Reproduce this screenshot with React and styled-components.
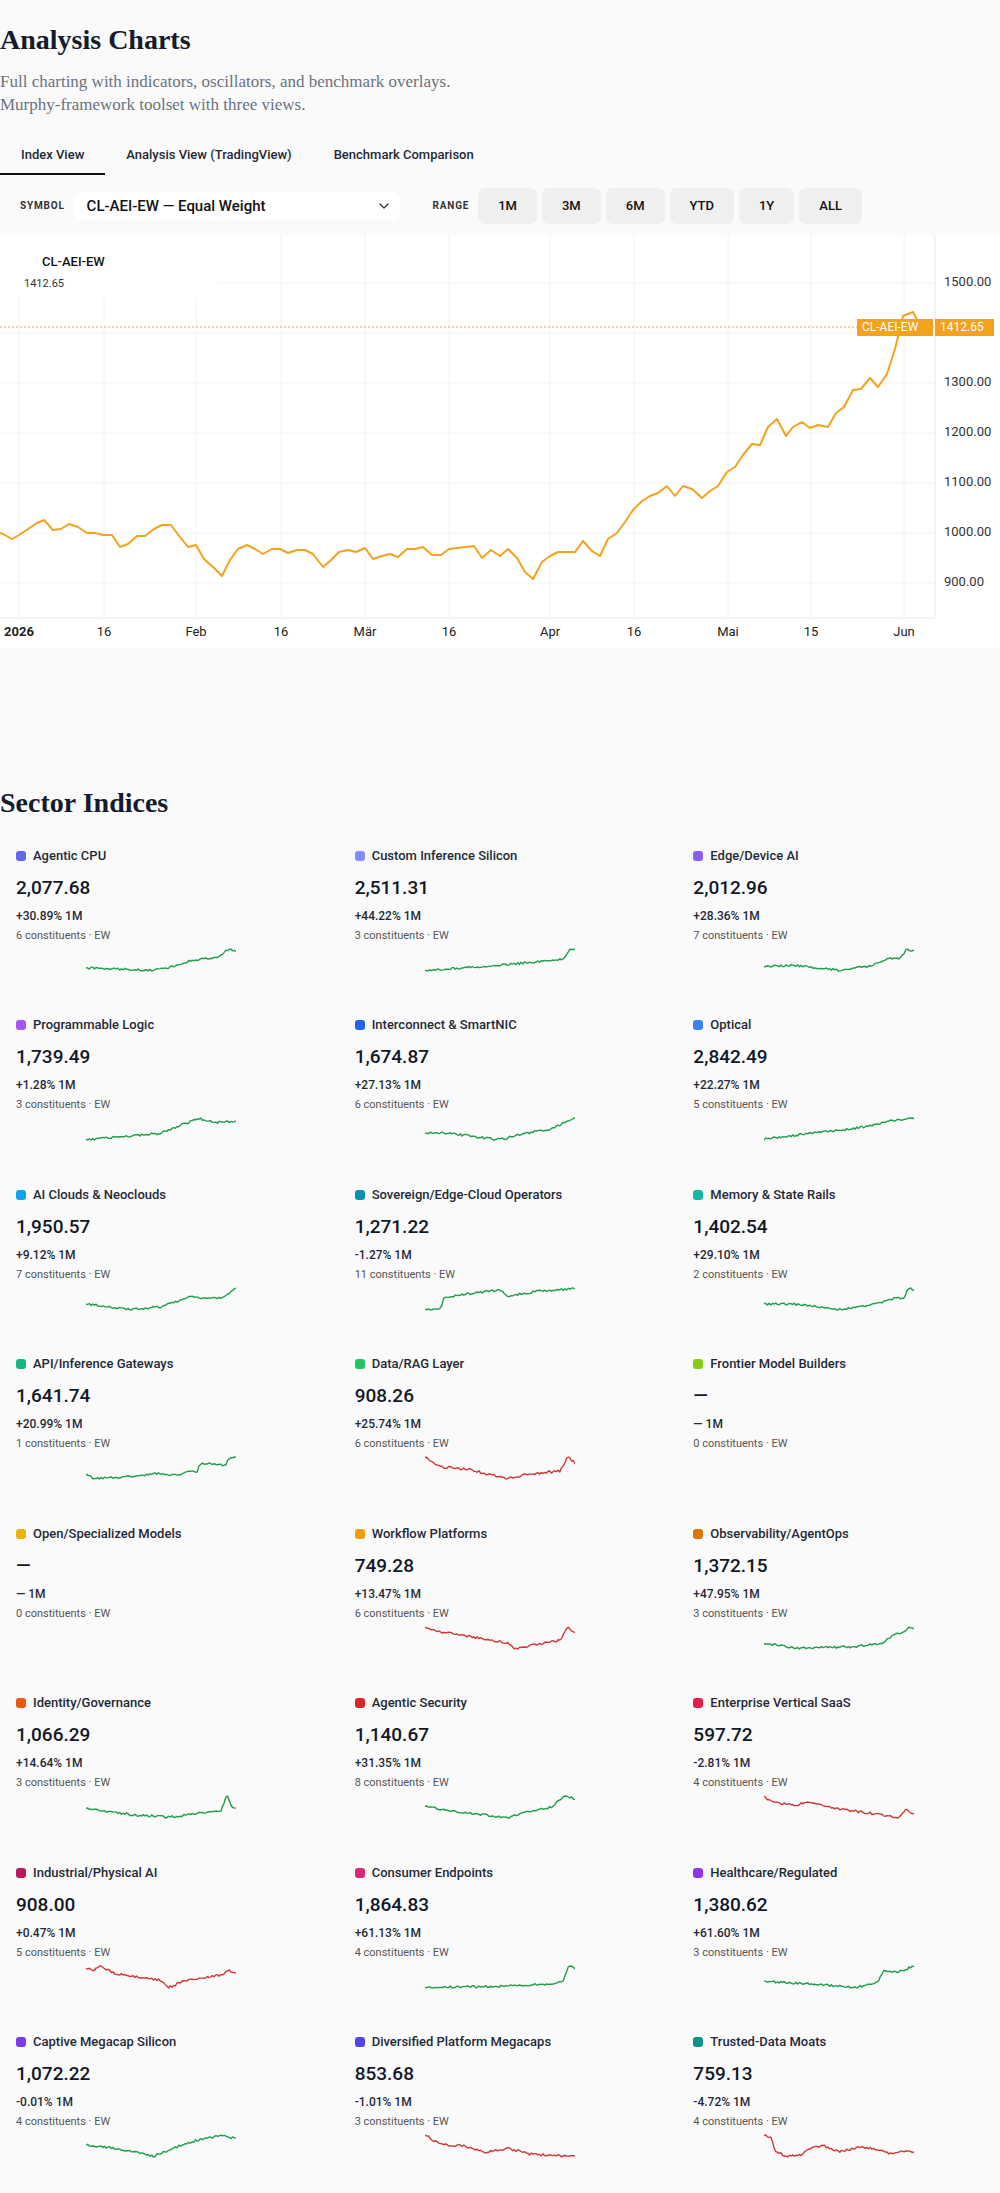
import React from "react";
import styled, { createGlobalStyle } from "styled-components";
import { ChevronDown } from "lucide-react";

const GlobalStyle = createGlobalStyle`
  html, body {
    margin: 0;
    padding: 0;
    background: #fafafa;
  }
  body {
    font-family: Roboto, "Liberation Sans", Arial, sans-serif;
    color: #111827;
  }
  * {
    box-sizing: border-box;
  }
`;

const Page = styled.div`
  width: 1000px;
`;

const Title = styled.h1`
  margin: 23px 0 0;
  font-family: "Liberation Serif", "Times New Roman", serif;
  font-size: 28px;
  line-height: 34px;
  font-weight: 700;
  color: #141b2d;
`;

const Subtitle = styled.p`
  margin: 13px 0 0;
  font-family: "Liberation Serif", "Times New Roman", serif;
  font-size: 17px;
  line-height: 23px;
  color: #6b7280;
`;

const Tabs = styled.div`
  display: flex;
  margin-top: 21px;
`;

const Tab = styled.button`
  border: 0;
  background: none;
  padding: 10px 21px;
  font-family: inherit;
  font-size: 13px;
  line-height: 16px;
  font-weight: 500;
  color: #1f2937;
  border-bottom: 2px solid ${(p) => (p.$active ? "#111" : "transparent")};
  cursor: pointer;
`;

const Toolbar = styled.div`
  display: flex;
  align-items: center;
  height: 36px;
  margin-top: 12.5px;
  padding-left: 20px;
`;

const FieldLabel = styled.span`
  font-size: 10px;
  font-weight: 700;
  letter-spacing: 0.8px;
  color: #333;
  margin-right: ${(p) => p.$gap}px;
  margin-left: ${(p) => p.$offset || 0}px;
`;

const Select = styled.div`
  display: flex;
  align-items: center;
  justify-content: space-between;
  width: 326px;
  height: 28px;
  padding: 0 8px 0 13px;
  background: #fff;
  border-radius: 7px;
  font-size: 15px;
  font-weight: 500;
  color: #111;
`;

const RangeGroup = styled.div`
  display: flex;
  gap: 5px;
`;

const RangeButton = styled.button`
  height: 36px;
  padding: 0 20px;
  border: 0;
  border-radius: 7px;
  background: #efefef;
  font-family: inherit;
  font-size: 13px;
  font-weight: 500;
  color: #111;
  cursor: pointer;
`;

const ChartPanel = styled.div`
  position: relative;
  margin-top: 11px;
  height: 413px;
  background: #fff;
`;

const ChartSvg = styled.svg`
  display: block;
  font-family: Roboto, "Liberation Sans", Arial, sans-serif;
`;

const Legend = styled.div`
  position: absolute;
  top: 0;
  left: 0;
  width: 217px;
  height: 62px;
  background: #fff;
  display: flex;
  flex-direction: column;
`;

const LegendName = styled.div`
  margin: 19px 0 0 42px;
  font-size: 13px;
  line-height: 16px;
  font-weight: 500;
  color: #111;
`;

const LegendValue = styled.div`
  margin: 7px 0 0 24px;
  font-size: 11px;
  line-height: 14px;
  color: #333;
`;

const PriceTags = styled.div`
  position: absolute;
  top: 84px;
  left: 857px;
  display: flex;
  gap: 2px;
`;

const PriceTag = styled.div`
  height: 17px;
  width: ${(p) => p.$w}px;
  background: #f4a21c;
  color: #fff;
  font-size: 12px;
  line-height: 17px;
  padding-left: 5px;
`;

const SectionTitle = styled.h2`
  margin: 138px 0 0;
  font-family: "Liberation Serif", "Times New Roman", serif;
  font-size: 28px;
  line-height: 34px;
  font-weight: 700;
  color: #141b2d;
`;

const Grid = styled.div`
  display: grid;
  grid-template-columns: repeat(3, 1fr);
  column-gap: 16px;
  margin-top: 15px;
`;

const Card = styled.div`
  padding: 12px 16px 30.5px;
`;

const CardHead = styled.div`
  display: flex;
  align-items: center;
  gap: 7px;
  font-size: 13px;
  line-height: 18px;
  font-weight: 500;
  color: #1f2937;
`;

const Dot = styled.span`
  width: 10px;
  height: 10px;
  border-radius: 3px;
  background: ${(p) => p.$color};
`;

const Value = styled.div`
  margin-top: 10px;
  font-size: 19px;
  line-height: 26px;
  font-weight: 500;
  color: #111827;
`;

const Change = styled.div`
  margin-top: 7px;
  font-size: 12px;
  line-height: 16px;
  font-weight: 500;
  color: #1f2937;
`;

const Meta = styled.div`
  margin-top: 5px;
  font-size: 11px;
  line-height: 14px;
  color: #555;
`;

const Spark = styled.svg`
  display: block;
  margin: 3px auto 0;
`;

const chartPoints = [
  [0, 533], [3, 534], [12, 539], [19, 535], [28, 529], [37, 523], [44, 520], [53, 530], [61, 529],
  [69, 524], [78, 527], [87, 533], [95, 533], [103, 535], [112, 535], [120, 547], [128, 544],
  [137, 536], [145, 536], [154, 529], [162, 525], [171, 525], [180, 537], [188, 547], [196, 545],
  [204, 559], [213, 567], [222, 576], [230, 560], [238, 549], [247, 545], [255, 549], [263, 554],
  [272, 549], [280, 549], [288, 553], [297, 550], [305, 550], [313, 554], [323, 567], [331, 560],
  [339, 552], [348, 550], [356, 552], [365, 548], [373, 559], [382, 556], [390, 554], [398, 557],
  [407, 549], [415, 549], [423, 547], [432, 555], [441, 555], [449, 549], [457, 548], [466, 547],
  [474, 546], [482, 558], [491, 550], [500, 556], [508, 549], [517, 558], [525, 572], [533, 579],
  [542, 562], [550, 556], [558, 552], [567, 552], [575, 552], [583, 541], [592, 551], [600, 556],
  [608, 539], [617, 533], [625, 522], [633, 510], [642, 501], [650, 496], [658, 493], [667, 486],
  [675, 496], [683, 486], [692, 489], [702, 498], [710, 491], [718, 486], [727, 472], [735, 467],
  [743, 455], [752, 444], [760, 445], [768, 427], [777, 419], [786, 436], [793, 427], [802, 422],
  [810, 428], [818, 425], [828, 427], [836, 413], [844, 407], [853, 390], [861, 389], [870, 378],
  [878, 387], [887, 374], [895, 349], [903, 316], [913, 312], [921, 327],
];

const TOP = 235;
const linePath = chartPoints
  .map(([x, y], i) => `${i ? "L" : "M"}${x},${y - TOP}`)
  .join(" ");

const yTicks = [1500, 1400, 1300, 1200, 1100, 1000, 900];
const xTicks = [
  [19, "2026", true],
  [104, "16"],
  [196, "Feb"],
  [281, "16"],
  [365, "Mär"],
  [449, "16"],
  [550, "Apr"],
  [634, "16"],
  [728, "Mai"],
  [811, "15"],
  [904, "Jun"],
];

function IndexChart() {
  return (
    <ChartPanel>
      <ChartSvg width="1000" height="413" viewBox="0 0 1000 413">
        {yTicks.map((v, i) => (
          <line key={v} x1="0" x2="935" y1={48 + i * 50} y2={48 + i * 50} stroke="#f2f2f2" />
        ))}
        {xTicks.map(([x]) => (
          <line key={x} x1={x} x2={x} y1="0" y2="383" stroke="#f2f2f2" />
        ))}
        <line x1="935" x2="935" y1="0" y2="383" stroke="#e8e8e8" />
        <line x1="0" x2="935" y1="383" y2="383" stroke="#e8e8e8" />
        <line x1="0" x2="935" y1="92" y2="92" stroke="#f4a21c" strokeDasharray="2 2" />
        <path d={linePath} fill="none" stroke="#f4a21c" strokeWidth="2" strokeLinejoin="round" />
        {yTicks.map((v, i) => (
          <text key={v} x="944" y={48 + i * 50} dominantBaseline="middle" fontSize="13" fill="#333">
            {v.toFixed(2)}
          </text>
        ))}
        {xTicks.map(([x, label, bold]) => (
          <text
            key={x}
            x={x}
            y="398"
            textAnchor="middle"
            dominantBaseline="middle"
            fontSize="13"
            fontWeight={bold ? 700 : 400}
            fill="#222"
          >
            {label}
          </text>
        ))}
      </ChartSvg>
      <Legend>
        <LegendName>CL-AEI-EW</LegendName>
        <LegendValue>1412.65</LegendValue>
      </Legend>
      <PriceTags>
        <PriceTag $w={76}>CL-AEI-EW</PriceTag>
        <PriceTag $w={59}>1412.65</PriceTag>
      </PriceTags>
    </ChartPanel>
  );
}

function rng(seed) {
  let a = seed * 9973 + 17;
  return () => {
    a |= 0;
    a = (a + 0x6d2b79f5) | 0;
    let t = Math.imul(a ^ (a >>> 15), 1 | a);
    t = (t + Math.imul(t ^ (t >>> 7), 61 | t)) ^ t;
    return ((t ^ (t >>> 14)) >>> 0) / 4294967296;
  };
}

const SW = 150;
const SH = 28;

function sparkPath(keys, seed) {
  const r = rng(seed);
  const n = 90;
  const vals = [];
  let j = 0;
  for (let i = 0; i < n; i++) {
    const t = i / (n - 1);
    while (j < keys.length - 2 && t > keys[j + 1][0]) j++;
    const [x0, y0] = keys[j];
    const [x1, y1] = keys[j + 1];
    const f = Math.min(1, Math.max(0, (t - x0) / (x1 - x0 || 1)));
    vals.push(y0 + (y1 - y0) * f + (r() - 0.5) * 0.09);
  }
  const min = Math.min(...vals);
  const max = Math.max(...vals);
  const pad = 3;
  return vals
    .map((v, i) => {
      const x = (i / (n - 1)) * SW;
      const y = pad + (1 - (v - min) / (max - min || 1)) * (SH - pad * 2);
      return `${i ? "L" : "M"}${x.toFixed(1)},${y.toFixed(1)}`;
    })
    .join(" ");
}

const GREEN = "#1f9d4c";
const RED = "#d33636";

const sectors = [
  ["Agentic CPU", "#6366f1", "2,077.68", "+30.89%", 6, GREEN, [[0, 0.15], [0.2, 0.1], [0.42, 0.04], [0.55, 0.15], [0.7, 0.45], [0.8, 0.55], [0.88, 0.62], [0.95, 0.95], [1, 0.88]]],
  ["Custom Inference Silicon", "#818cf8", "2,511.31", "+44.22%", 3, GREEN, [[0, 0.02], [0.3, 0.15], [0.6, 0.3], [0.8, 0.42], [0.93, 0.52], [0.97, 0.95], [1, 0.9]]],
  ["Edge/Device AI", "#8b5cf6", "2,012.96", "+28.36%", 7, GREEN, [[0, 0.2], [0.2, 0.25], [0.5, 0.04], [0.7, 0.2], [0.85, 0.55], [0.9, 0.5], [0.95, 0.9], [1, 0.9]]],
  ["Programmable Logic", "#a855f7", "1,739.49", "+1.28%", 3, GREEN, [[0, 0.05], [0.3, 0.2], [0.5, 0.3], [0.75, 0.92], [0.85, 0.75], [1, 0.8]]],
  ["Interconnect & SmartNIC", "#2563eb", "1,674.87", "+27.13%", 6, GREEN, [[0, 0.3], [0.1, 0.35], [0.5, 0.08], [0.65, 0.3], [0.85, 0.5], [1, 0.9]]],
  ["Optical", "#3b82f6", "2,842.49", "+22.27%", 5, GREEN, [[0, 0.05], [0.3, 0.3], [0.5, 0.4], [0.7, 0.6], [0.85, 0.8], [1, 0.9]]],
  ["AI Clouds & Neoclouds", "#0ea5e9", "1,950.57", "+9.12%", 7, GREEN, [[0, 0.3], [0.3, 0.08], [0.5, 0.2], [0.7, 0.6], [0.8, 0.5], [0.9, 0.55], [1, 0.9]]],
  ["Sovereign/Edge-Cloud Operators", "#0891b2", "1,271.22", "-1.27%", 11, GREEN, [[0, 0.04], [0.1, 0.05], [0.13, 0.55], [0.3, 0.7], [0.5, 0.85], [0.55, 0.6], [0.75, 0.8], [1, 0.9]]],
  ["Memory & State Rails", "#14b8a6", "1,402.54", "+29.10%", 2, GREEN, [[0, 0.3], [0.2, 0.3], [0.5, 0.08], [0.75, 0.3], [0.85, 0.5], [0.9, 0.6], [0.93, 0.45], [0.96, 0.95], [1, 0.85]]],
  ["API/Inference Gateways", "#10b981", "1,641.74", "+20.99%", 1, GREEN, [[0, 0.25], [0.05, 0.08], [0.2, 0.1], [0.5, 0.3], [0.6, 0.2], [0.7, 0.4], [0.74, 0.35], [0.76, 0.7], [0.85, 0.7], [0.93, 0.6], [0.95, 0.95], [1, 1]]],
  ["Data/RAG Layer", "#22c55e", "908.26", "+25.74%", 6, RED, [[0, 0.95], [0.05, 0.8], [0.1, 0.6], [0.3, 0.5], [0.55, 0.18], [0.7, 0.35], [0.9, 0.45], [0.95, 0.95], [1, 0.75]]],
  ["Frontier Model Builders", "#84cc16", null, null, 0, null, null],
  ["Open/Specialized Models", "#eab308", null, null, 0, null, null],
  ["Workflow Platforms", "#f59e0b", "749.28", "+13.47%", 6, RED, [[0, 0.95], [0.05, 0.8], [0.3, 0.55], [0.55, 0.3], [0.6, 0.05], [0.75, 0.25], [0.9, 0.4], [0.95, 0.9], [1, 0.7]]],
  ["Observability/AgentOps", "#d97706", "1,372.15", "+47.95%", 3, GREEN, [[0, 0.3], [0.2, 0.1], [0.6, 0.15], [0.8, 0.3], [0.85, 0.6], [0.93, 0.7], [0.97, 0.95], [1, 0.85]]],
  ["Identity/Governance", "#ea580c", "1,066.29", "+14.64%", 3, GREEN, [[0, 0.4], [0.3, 0.15], [0.55, 0.05], [0.75, 0.2], [0.9, 0.3], [0.94, 0.95], [0.97, 0.5], [1, 0.4]]],
  ["Agentic Security", "#dc2626", "1,140.67", "+31.35%", 8, GREEN, [[0, 0.5], [0.2, 0.3], [0.55, 0.05], [0.7, 0.3], [0.85, 0.5], [0.93, 0.95], [1, 0.8]]],
  ["Enterprise Vertical SaaS", "#e11d48", "597.72", "-2.81%", 4, RED, [[0, 0.95], [0.05, 0.75], [0.2, 0.6], [0.3, 0.75], [0.5, 0.45], [0.7, 0.3], [0.8, 0.2], [0.9, 0.1], [0.95, 0.45], [1, 0.25]]],
  ["Industrial/Physical AI", "#be185d", "908.00", "+0.47%", 5, RED, [[0, 0.85], [0.05, 0.75], [0.1, 0.9], [0.2, 0.6], [0.5, 0.35], [0.55, 0.05], [0.65, 0.3], [0.9, 0.55], [0.95, 0.75], [1, 0.6]]],
  ["Consumer Endpoints", "#db2777", "1,864.83", "+61.13%", 4, GREEN, [[0, 0.05], [0.5, 0.1], [0.85, 0.2], [0.92, 0.35], [0.96, 0.95], [1, 0.85]]],
  ["Healthcare/Regulated", "#9333ea", "1,380.62", "+61.60%", 3, GREEN, [[0, 0.3], [0.4, 0.15], [0.6, 0.04], [0.75, 0.2], [0.8, 0.75], [0.9, 0.7], [1, 0.95]]],
  ["Captive Megacap Silicon", "#7c3aed", "1,072.22", "-0.01%", 4, GREEN, [[0, 0.5], [0.25, 0.3], [0.45, 0.04], [0.6, 0.4], [0.75, 0.7], [0.9, 0.85], [1, 0.75]]],
  ["Diversified Platform Megacaps", "#4f46e5", "853.68", "-1.01%", 3, RED, [[0, 0.95], [0.1, 0.6], [0.25, 0.55], [0.4, 0.3], [0.55, 0.45], [0.7, 0.25], [0.85, 0.2], [1, 0.15]]],
  ["Trusted-Data Moats", "#0d9488", "759.13", "-4.72%", 4, RED, [[0, 0.95], [0.05, 0.85], [0.07, 0.3], [0.15, 0.05], [0.25, 0.1], [0.3, 0.4], [0.4, 0.5], [0.5, 0.25], [0.65, 0.45], [0.75, 0.35], [0.85, 0.15], [0.95, 0.3], [1, 0.25]]],
];

function SectorCard({ data, index }) {
  const [name, color, value, change, count, lineColor, keys] = data;
  return (
    <Card>
      <CardHead>
        <Dot $color={color} />
        {name}
      </CardHead>
      <Value>{value || "—"}</Value>
      <Change>{change || "—"} 1M</Change>
      <Meta>{count} constituents · EW</Meta>
      {keys && (
        <Spark width={SW} height={SH} viewBox={`0 0 ${SW} ${SH}`}>
          <path d={sparkPath(keys, index + 3)} fill="none" stroke={lineColor} strokeWidth="1.4" strokeLinejoin="round" />
        </Spark>
      )}
    </Card>
  );
}

const ranges = ["1M", "3M", "6M", "YTD", "1Y", "ALL"];

export default function App() {
  return (
    <Page>
      <GlobalStyle />
      <Title>Analysis Charts</Title>
      <Subtitle>
        Full charting with indicators, oscillators, and benchmark overlays.
        <br />
        Murphy-framework toolset with three views.
      </Subtitle>
      <Tabs>
        <Tab $active>Index View</Tab>
        <Tab>Analysis View (TradingView)</Tab>
        <Tab>Benchmark Comparison</Tab>
      </Tabs>
      <Toolbar>
        <FieldLabel $gap={9}>SYMBOL</FieldLabel>
        <Select>
          CL-AEI-EW — Equal Weight
          <ChevronDown size={16} color="#333" strokeWidth={1.8} />
        </Select>
        <FieldLabel $gap={9} $offset={33}>
          RANGE
        </FieldLabel>
        <RangeGroup>
          {ranges.map((r) => (
            <RangeButton key={r}>{r}</RangeButton>
          ))}
        </RangeGroup>
      </Toolbar>
      <IndexChart />
      <SectionTitle>Sector Indices</SectionTitle>
      <Grid>
        {sectors.map((s, i) => (
          <SectorCard key={s[0]} data={s} index={i} />
        ))}
      </Grid>
    </Page>
  );
}
